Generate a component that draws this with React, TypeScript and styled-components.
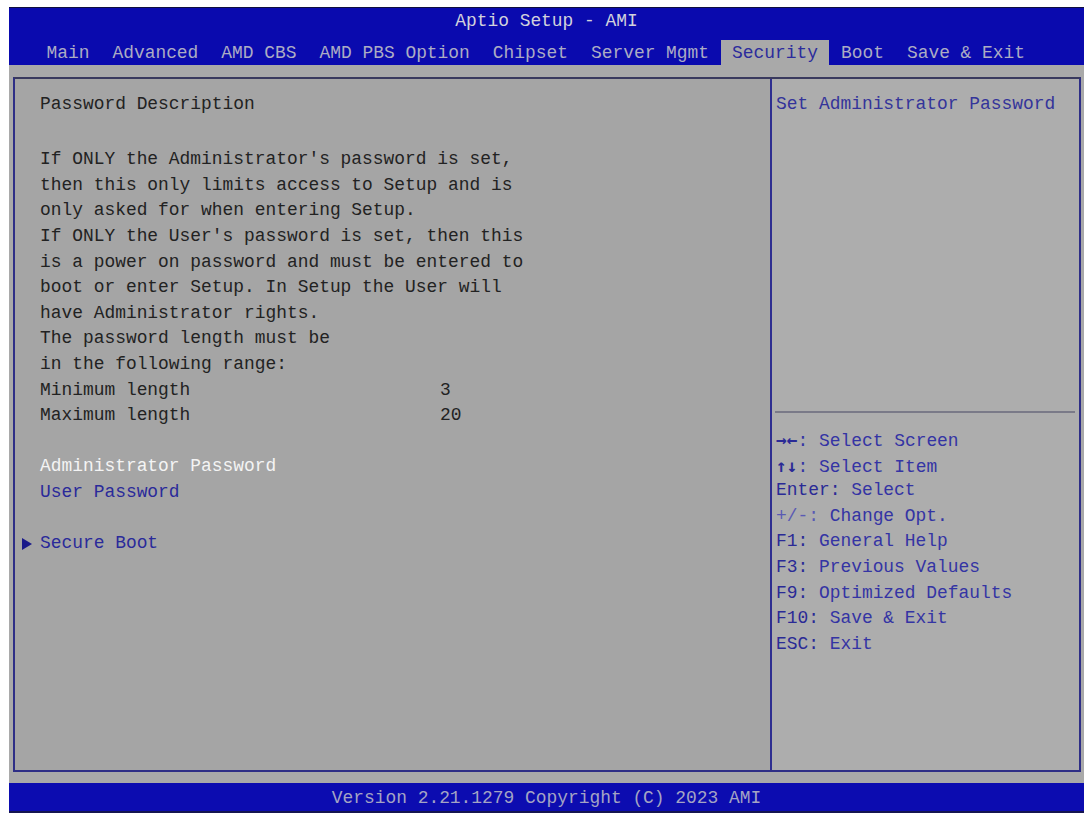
import styled, { createGlobalStyle } from 'styled-components'

const GlobalStyle = createGlobalStyle`
    html, body {
        margin: 0;
        padding: 0;
        background: #ffffff;
    }
`

const mono = `"Liberation Mono", "DejaVu Sans Mono", monospace`

const Screen = styled.div`
    width: 1075px;
    height: 806px;
    margin: 7px 0 0 9px;
    display: flex;
    flex-direction: column;
    background-color: #a9a9a9;
    font-family: ${mono};
    font-size: 17.9px;
`

const Header = styled.header`
    height: 58px;
    background-color: #0a0aae;
    display: flex;
    flex-direction: column;
    align-items: center;
    border-top: 1px solid #101040;
    box-sizing: border-box;
`

const Title = styled.div`
    line-height: 26px;
    color: #d2d2dc;
    white-space: pre;
`

const TabBar = styled.nav`
    align-self: stretch;
    display: flex;
    margin-top: 6px;
    padding-left: 26px;
    height: 25px;
`

const Tab = styled.div<{ $active?: boolean }>`
    padding: 0 11.5px;
    line-height: 26px;
    white-space: pre;
    color: ${(p) => (p.$active ? '#2c2c9c' : '#acacc4')};
    background-color: ${(p) => (p.$active ? '#a9a9a9' : 'transparent')};
`

const Body = styled.main`
    flex: 1;
    padding: 12px 3px 11px 4px;
    display: flex;
`

const Frame = styled.div`
    flex: 1;
    display: grid;
    grid-template-columns: 755px 1fr;
    border: 2px solid #2e2e86;
    border-top-color: #3a3a5e;
`

const LeftPane = styled.section`
    background-color: #a5a5a5;
    padding: 13px 0 0 25px;
`

const Line = styled.div<{ $tone?: 'text' | 'active' | 'link' }>`
    line-height: 25.6px;
    height: 25.6px;
    white-space: pre;
    color: ${(p) =>
        p.$tone === 'active' ? '#f4f4f4' : p.$tone === 'link' ? '#2a2a9a' : '#222222'};
`

const Blank = styled.div<{ $extra?: number }>`
    height: ${(p) => 25.6 + (p.$extra || 0)}px;
`

const ValueRow = styled.div`
    display: grid;
    grid-template-columns: 400px auto;
    line-height: 25.6px;
    height: 25.6px;
    color: #222222;
    white-space: pre;
`

const SubMenu = styled.div`
    display: flex;
    align-items: center;
    gap: 8px;
    margin-left: -18px;
    line-height: 25.6px;
    height: 25.6px;
    color: #2a2a9a;
`

const Triangle = styled.span`
    width: 0;
    height: 0;
    border-top: 6px solid transparent;
    border-bottom: 6px solid transparent;
    border-left: 10px solid #1a1a8a;
`

const RightPane = styled.aside`
    background-color: #adadad;
    border-left: 2px solid #2e2e90;
    display: flex;
    flex-direction: column;
`

const HelpTop = styled.div`
    height: 332px;
    padding: 13px 4px 0 4px;
    box-sizing: border-box;
    color: #34349a;
    line-height: 25.6px;
    white-space: pre;
`

const Separator = styled.div`
    height: 2px;
    margin: 0 4px 0 3px;
    background-color: #7a7a88;
`

const HelpKeys = styled.div`
    padding: 14px 4px 0 4px;
`

const HelpLine = styled.div`
    line-height: 25.6px;
    height: 25.6px;
    white-space: pre;
    color: #3434a4;
`

const Key = styled.span<{ $light?: boolean; $arrow?: boolean }>`
    color: ${(p) => (p.$light ? '#5a5ab4' : '#2a2a96')};
    font-family: ${(p) => (p.$arrow ? '"DejaVu Sans Mono", monospace' : 'inherit')};
    font-weight: ${(p) => (p.$arrow ? 700 : 400)};
`

const Footer = styled.footer`
    height: 30px;
    background-color: #0c0cb0;
    color: #a4a4c4;
    text-align: center;
    line-height: 30px;
    white-space: pre;
    border-bottom: 2px solid #151550;
    box-sizing: border-box;
`

const tabs = ['Main', 'Advanced', 'AMD CBS', 'AMD PBS Option', 'Chipset', 'Server Mgmt', 'Security', 'Boot', 'Save & Exit']

const description = [
    "If ONLY the Administrator's password is set,",
    'then this only limits access to Setup and is',
    'only asked for when entering Setup.',
    "If ONLY the User's password is set, then this",
    'is a power on password and must be entered to',
    'boot or enter Setup. In Setup the User will',
    'have Administrator rights.',
    'The password length must be',
    'in the following range:',
]

// key, description, lighter key, arrow glyphs
const help: [string, string, boolean, boolean][] = [
    ['\u2192\u2190', ': Select Screen', false, true],
    ['\u2191\u2193', ': Select Item', false, true],
    ['Enter:', ' Select', false, false],
    ['+/-:', ' Change Opt.', true, false],
    ['F1:', ' General Help', false, false],
    ['F3:', ' Previous Values', false, false],
    ['F9:', ' Optimized Defaults', false, false],
    ['F10:', ' Save & Exit', false, false],
    ['ESC:', ' Exit', false, false],
]

const App = () => {
    return (
        <>
            <GlobalStyle />
            <Screen>
                <Header>
                    <Title>Aptio Setup - AMI</Title>
                    <TabBar>
                        {tabs.map((t) => (
                            <Tab key={t} $active={t === 'Security'}>
                                {t}
                            </Tab>
                        ))}
                    </TabBar>
                </Header>

                <Body>
                    <Frame>
                        <LeftPane>
                            <Line>Password Description</Line>
                            <Blank $extra={4} />
                            {description.map((d) => (
                                <Line key={d}>{d}</Line>
                            ))}
                            <ValueRow>
                                <span>Minimum length</span>
                                <span>3</span>
                            </ValueRow>
                            <ValueRow>
                                <span>Maximum length</span>
                                <span>20</span>
                            </ValueRow>
                            <Blank />
                            <Line $tone="active">Administrator Password</Line>
                            <Line $tone="link">User Password</Line>
                            <Blank />
                            <SubMenu>
                                <Triangle />
                                <span>Secure Boot</span>
                            </SubMenu>
                        </LeftPane>

                        <RightPane>
                            <HelpTop>Set Administrator Password</HelpTop>
                            <Separator />
                            <HelpKeys>
                                {help.map(([k, v, light, arrow]) => (
                                    <HelpLine key={k}>
                                        <Key $light={light} $arrow={arrow}>
                                            {k}
                                        </Key>
                                        {v}
                                    </HelpLine>
                                ))}
                            </HelpKeys>
                        </RightPane>
                    </Frame>
                </Body>

                <Footer>Version 2.21.1279 Copyright (C) 2023 AMI</Footer>
            </Screen>
        </>
    )
}

export default App
